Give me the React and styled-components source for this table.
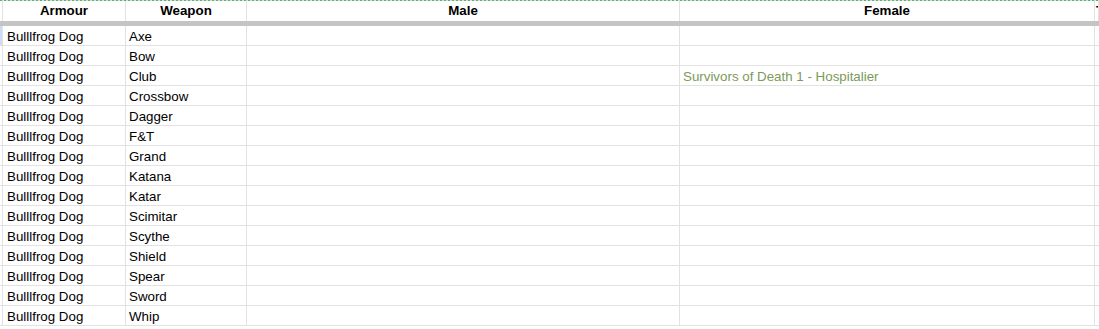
import React from "react";
import styled, { createGlobalStyle } from "styled-components";

const Global = createGlobalStyle`
  html, body { margin: 0; padding: 0; background: #fff; }
  body { font-family: "Liberation Sans", Arial, sans-serif; }
`;

const COLS = "3px 123px 121px 433px 415px 1fr";

const Sheet = styled.div`
  width: 1099px;
  height: 329px;
  overflow: hidden;
  background: #fff;
  font-family: "Liberation Sans", Arial, sans-serif;
  font-size: 13.33px;
  color: #000;
`;

const HeaderRow = styled.div`
  display: grid;
  grid-template-columns: ${COLS};
  height: 21px;
  box-sizing: border-box;
  padding-top: 1px;
  background-image: repeating-linear-gradient(
    90deg,
    #5fae6f 0 2px,
    #cfe6d3 2px 4px
  );
  background-size: 100% 1px;
  background-repeat: no-repeat;
  background-position: top left;
`;

const HeadCell = styled.div`
  box-sizing: border-box;
  border-right: 1px solid #e2e2e2;
  font-weight: bold;
  text-align: ${(p) => p.$align || "center"};
  line-height: 20px;
  white-space: nowrap;
  overflow: hidden;
  padding-left: ${(p) => (p.$align === "left" ? "1px" : "0")};
`;

const FreezeBar = styled.div`
  height: 5px;
  background: #c4c4c4;
`;

const Row = styled.div`
  display: grid;
  grid-template-columns: ${COLS};
  height: 20px;
`;

const Strip = styled.div`
  box-sizing: border-box;
  border-right: 1px solid #e2e2e2;
  border-bottom: 1px solid #e2e2e2;
  background: ${(p) => (p.$active ? "#cfdcf5" : "#fff")};
`;

const Cell = styled.div`
  box-sizing: border-box;
  border-right: 1px solid #e2e2e2;
  border-bottom: 1px solid #e2e2e2;
  padding: 1px 3px 0 ${(p) => p.$pl || 3}px;
  line-height: 19px;
  white-space: nowrap;
  overflow: hidden;
  color: ${(p) => p.$color || "#000"};
`;

const weapons = [
  "Axe",
  "Bow",
  "Club",
  "Crossbow",
  "Dagger",
  "F&T",
  "Grand",
  "Katana",
  "Katar",
  "Scimitar",
  "Scythe",
  "Shield",
  "Spear",
  "Sword",
  "Whip",
];

const female = { Club: "Survivors of Death 1 - Hospitalier" };

export default function App() {
  return (
    <Sheet>
      <Global />
      <HeaderRow>
        <HeadCell />
        <HeadCell>Armour</HeadCell>
        <HeadCell>Weapon</HeadCell>
        <HeadCell>Male</HeadCell>
        <HeadCell>Female</HeadCell>
        <HeadCell $align="left">T</HeadCell>
      </HeaderRow>
      <FreezeBar />
      {weapons.map((w, i) => (
        <Row key={w}>
          <Strip $active={i === 0} />
          <Cell $pl={4}>Bulllfrog Dog</Cell>
          <Cell>{w}</Cell>
          <Cell />
          <Cell $color="#7b9a58">{female[w] || ""}</Cell>
          <Cell />
        </Row>
      ))}
    </Sheet>
  );
}
